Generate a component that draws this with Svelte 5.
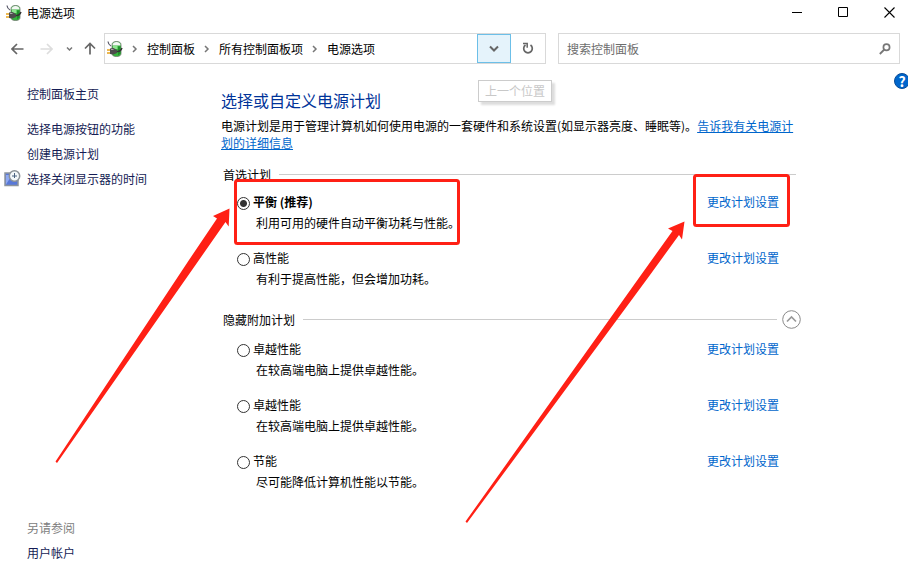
<script>
	const crumbs = ['控制面板', '所有控制面板项', '电源选项'];

	const groups = [
		{
			title: '首选计划',
			collapsible: false,
			plans: [
				{ id: 'balanced', name: '平衡 (推荐)', desc: '利用可用的硬件自动平衡功耗与性能。' },
				{ id: 'high', name: '高性能', desc: '有利于提高性能，但会增加功耗。' }
			]
		},
		{
			title: '隐藏附加计划',
			collapsible: true,
			plans: [
				{ id: 'ultimate-1', name: '卓越性能', desc: '在较高端电脑上提供卓越性能。' },
				{ id: 'ultimate-2', name: '卓越性能', desc: '在较高端电脑上提供卓越性能。' },
				{ id: 'saver', name: '节能', desc: '尽可能降低计算机性能以节能。' }
			]
		}
	];

	let active = $state('balanced');
	let search = $state('');
	let showExtra = $state(true);

	function toggleExtra() {
		showExtra = !showExtra;
	}
</script>

{#snippet powerIcon()}
	<svg class="power" width="16" height="16" viewBox="0 0 16 16" aria-hidden="true">
		<path d="M5 4q0-3.500 4.500-3.500T14 4v8.500q0 3-4.500 3T5 12.500z" fill="#35b53c" stroke="#6b756b" stroke-width="0.8" />
		<path d="M5.500 4.500Q5.500 1 9.500 1t4 3.500z" fill="#f4f7f4" />
		<path d="M6 5h4.500v3H6z" fill="#8be58d" />
		<path d="M11 5.500h2.500v7l-2.500 2z" fill="#1f8f2a" />
		<path d="M1 .5q.2 3 3 4.500" fill="none" stroke="#5b5b6b" stroke-width="1.200" />
		<path d="M0 9h3M0 12h3" stroke="#e8a21c" stroke-width="1.600" />
		<path d="M3 7.500l3.500-.5 3.500 2v3l-3.500 1.500L3 13z" fill="#4c4c4c" />
		<path d="M4 8.500h2.500" stroke="#aaa" />
		<path d="M10 10.500q3.500.3 5-3.500" fill="none" stroke="#333" stroke-width="1.500" />
	</svg>
{/snippet}

{#snippet chevron()}
	<svg class="sep" width="6" height="8" viewBox="0 0 6 8" aria-hidden="true">
		<path d="M1 1l3 3-3 3" fill="none" stroke="#777" stroke-width="1.500" />
	</svg>
{/snippet}

<div class="window">
	<header class="titlebar">
		{@render powerIcon()}
		<span class="title">电源选项</span>
		<div class="controls">
			<button type="button" aria-label="最小化">
				<svg width="11" height="11" viewBox="0 0 11 11"><path d="M0 5.500h10" stroke="#000" /></svg>
			</button>
			<button type="button" aria-label="最大化">
				<svg width="11" height="11" viewBox="0 0 11 11"><path d="M.5.500h9v9h-9z" fill="none" stroke="#000" /></svg>
			</button>
			<button type="button" aria-label="关闭">
				<svg width="11" height="11" viewBox="0 0 11 11"><path d="M.5.500l10 10M10.500.500l-10 10" stroke="#000" stroke-width="1.100" /></svg>
			</button>
		</div>
	</header>

	<nav class="toolbar">
		<div class="arrows">
			<button type="button" aria-label="后退">
				<svg width="13" height="12" viewBox="0 0 13 12"><path d="M12.500 6H1.500M6 1L1 6l5 5" fill="none" stroke="#666" stroke-width="1.700" /></svg>
			</button>
			<button type="button" aria-label="前进" disabled>
				<svg width="13" height="12" viewBox="0 0 13 12"><path d="M.5 6h11M7 1l5 5-5 5" fill="none" stroke="#ddd" stroke-width="1.700" /></svg>
			</button>
			<button type="button" class="recent" aria-label="最近的位置">
				<svg width="7" height="6" viewBox="0 0 7 6"><path d="M1 1.500l2.500 2.500L6 1.500" fill="none" stroke="#777" stroke-width="1.500" /></svg>
			</button>
			<button type="button" aria-label="上移">
				<svg width="12" height="13" viewBox="0 0 12 13"><path d="M6 12.500V1.500M1 6.500l5-5 5 5" fill="none" stroke="#666" stroke-width="1.700" /></svg>
			</button>
		</div>

		<div class="address">
			<div class="crumbs">
				{@render powerIcon()}
				{#each crumbs as crumb}
					{@render chevron()}
					<a href="#top">{crumb}</a>
				{/each}
			</div>
			<div class="dropdown">
				<button type="button" class="previous" aria-label="上一个位置">
					<svg width="10" height="7" viewBox="0 0 10 7"><path d="M1 1.500l4 4 4-4" fill="none" stroke="#666" stroke-width="2" /></svg>
				</button>
				<span class="tooltip" role="tooltip">上一个位置</span>
			</div>
			<button type="button" class="refresh" aria-label="刷新">
				<svg width="12" height="13" viewBox="0 0 12 13">
					<path d="M3.500 3A4.300 4.300 0 1 0 8.500 3" fill="none" stroke="#666" stroke-width="1.700" />
					<path d="M1 1.500h4.200v4.200" fill="none" stroke="#666" stroke-width="1.500" />
				</svg>
			</button>
		</div>

		<label class="search">
			<input type="text" placeholder="搜索控制面板" aria-label="搜索控制面板" bind:value={search} />
			<svg width="12" height="12" viewBox="0 0 12 12" aria-hidden="true">
				<circle cx="7.500" cy="4.300" r="3.100" fill="none" stroke="#777" stroke-width="1.700" />
				<path d="M5.300 6.500L.8 11" stroke="#777" stroke-width="1.800" />
			</svg>
		</label>
	</nav>

	<div class="body">
		<aside>
			<a class="home" href="#home">控制面板主页</a>
			<a href="#buttons">选择电源按钮的功能</a>
			<a href="#create">创建电源计划</a>
			<a class="with-icon" href="#display">
				<svg width="17" height="17" viewBox="0 0 17 17" aria-hidden="true">
					<rect x="1" y="3" width="13" height="12.500" fill="#5878d8" stroke="#8d949c" stroke-width="1.500" />
					<path d="M2 14.500L8 5H2z" fill="#8fa9f2" />
					<circle cx="10.500" cy="6" r="5.200" fill="#f3f8fb" stroke="#8b9298" stroke-width="1.500" />
					<path d="M10.500 3v5M8 6h5" stroke="#4b6380" stroke-width="1" />
				</svg>
				选择关闭显示器的时间
			</a>
			<div class="see-also">
				<span>另请参阅</span>
				<a href="#accounts">用户帐户</a>
			</div>
		</aside>

		<main>
			<h1>选择或自定义电源计划</h1>
			<p>
				电源计划是用于管理计算机如何使用电源的一套硬件和系统设置(如显示器亮度、睡眠等)。<a href="#more">告诉我有关电源计划的详细信息</a>
			</p>

			{#each groups as group}
				<section>
					<div class="group-head">
						<h2>{group.title}</h2>
						<hr />
						{#if group.collapsible}
							<button type="button" class="toggle" aria-label={group.title} onclick={toggleExtra}>
								<svg width="19" height="19" viewBox="0 0 19 19">
									<circle cx="9.500" cy="9.500" r="8.800" fill="none" stroke="#8a8a8a" />
									<path d="M5 11.500l4.500-4.500 4.500 4.500" fill="none" stroke="#999" stroke-width="1.700" />
								</svg>
							</button>
						{/if}
					</div>
					{#if !group.collapsible || showExtra}
						{#each group.plans as plan}
							<div class="plan">
								<input type="radio" name="plan" id={plan.id} value={plan.id} bind:group={active} />
								<div class="info">
									<label for={plan.id} class:active={plan.id === active}>{plan.name}</label>
									<span>{plan.desc}</span>
								</div>
								<a href="#settings">更改计划设置</a>
							</div>
						{/each}
					{/if}
				</section>
			{/each}
		</main>

		<button type="button" class="help" aria-label="帮助">?</button>
	</div>

	<!-- red callouts over the plan list -->
	<svg class="marks" width="908" height="580" viewBox="0 0 908 580" aria-hidden="true">
		<rect x="235.500" y="180.500" width="223" height="63" rx="2" />
		<rect x="694.500" y="175.500" width="94" height="50" rx="2" />
		<path d="M229.500 208.500L228.700 226.500L225.500 222L199 260L57 463L55.500 461.500L189 260L217 218.500L213 216z" />
		<path d="M684.500 221.500L682 239.500L679 235L650 275L467 523L465.500 521.500L641 275L672.500 231L668 228.500z" />
	</svg>
</div>

<style>
	:global(body) {
		margin: 0;
		background: #fff;
	}

	.window {
		position: relative;
		min-height: 100vh;
		box-sizing: border-box;
		display: flex;
		flex-direction: column;
		overflow: hidden;
		font-family: 'Noto Sans CJK SC', sans-serif;
		font-size: 12px;
		line-height: 17px;
		color: #000;
	}

	a {
		color: #0066cc;
		text-decoration: none;
	}

	button {
		display: flex;
		align-items: center;
		justify-content: center;
		padding: 0;
		border: none;
		background: none;
		font: inherit;
	}

	svg {
		flex: none;
	}

	.titlebar {
		display: flex;
		align-items: center;
		gap: 5px;
		height: 25px;
		padding-left: 6px;
	}

	.controls {
		display: flex;
		margin: 0 -4px 0 auto;
	}

	.controls button {
		width: 46px;
		height: 24px;
	}

	.toolbar {
		display: grid;
		grid-template-columns: 104px 454fr 342fr;
		height: 31px;
		margin: 8px 8px 0 0;
	}

	.arrows {
		display: flex;
		align-items: center;
		gap: 16px;
		padding-left: 11px;
	}

	.arrows .recent {
		margin: 0 -5px 0 -3px;
	}

	.address {
		display: flex;
		box-sizing: border-box;
		border: 1px solid #d9d9d9;
		margin-right: 12px;
	}

	.crumbs {
		display: flex;
		flex: 1;
		align-items: center;
		padding-left: 2px;
	}

	.crumbs a {
		color: #000;
	}

	.sep {
		margin: 0 9px;
	}

	.dropdown {
		position: relative;
		display: flex;
	}

	.previous {
		width: 34px;
		border: 1px solid #6cbfe8;
		background: #e5f3fb;
	}

	.tooltip {
		position: absolute;
		top: 46px;
		left: 1px;
		padding: 1px 6px;
		border: 1px solid #ccc;
		background: #fff;
		box-shadow: 3px 3px 2px #ddd;
		color: #c8c8c8;
		white-space: nowrap;
		line-height: 18px;
	}

	.refresh {
		width: 34px;
	}

	.search {
		display: flex;
		align-items: center;
		box-sizing: border-box;
		padding: 0 8px;
		border: 1px solid #d9d9d9;
	}

	.search input {
		flex: 1;
		min-width: 0;
		padding: 0;
		border: none;
		outline: none;
		background: none;
		font: inherit;
	}

	.search input::placeholder {
		color: #6d6d6d;
		opacity: 1;
	}

	.body {
		position: relative;
		display: flex;
		flex: 1;
	}

	aside {
		display: flex;
		flex-direction: column;
		gap: 8px;
		width: 194px;
		padding: 21px 0 19px 27px;
	}

	aside a {
		color: #151c55;
	}

	.home {
		margin-bottom: 10px;
	}

	.with-icon {
		display: flex;
		gap: 6px;
		margin-left: -23px;
	}

	.see-also {
		display: flex;
		flex-direction: column;
		gap: 8px;
		margin-top: auto;
		color: #808080;
	}

	main {
		flex: 1;
		max-width: 580px;
		padding-top: 24px;
	}

	h1 {
		margin: 0;
		font-size: 16px;
		font-weight: 400;
		line-height: 24px;
		color: #003399;
	}

	p {
		margin: 5px 0 14px;
	}

	p a {
		text-decoration: underline;
	}

	section {
		margin-left: 2px;
	}

	section + section {
		margin-top: 5px;
	}

	.group-head {
		display: flex;
		align-items: center;
		gap: 8px;
		height: 19px;
		margin-bottom: 9px;
	}

	section + section .group-head {
		margin-bottom: 11px;
	}

	h2 {
		margin: 0;
		font-size: 12px;
		font-weight: 400;
	}

	hr {
		flex: 1;
		margin: 0 5px 0 0;
		border: none;
		border-top: 1px solid #ccc;
	}

	.toggle {
		margin-left: -8px;
	}

	.plan {
		display: flex;
		align-items: flex-start;
		height: 56px;
		padding: 0 22px 0 14px;
	}

	.plan input {
		appearance: none;
		width: 13px;
		height: 13px;
		margin: 4px 3px 0 0;
		border: 1px solid #333;
		border-radius: 50%;
		box-sizing: border-box;
	}

	.plan input:checked {
		background: radial-gradient(#333 0 3px, #fff 4px);
	}

	.info {
		display: flex;
		flex: 1;
		flex-direction: column;
		gap: 4px;
	}

	.info span {
		padding-left: 3px;
	}

	.active {
		font-weight: 700;
	}

	.help {
		position: absolute;
		top: 9px;
		right: -2px;
		width: 16px;
		height: 16px;
		border: 1px solid #0a4c96;
		border-radius: 50%;
		background: #0066cc;
		color: #fff;
		font-size: 14px;
		font-weight: 700;
	}

	.marks {
		position: absolute;
		top: 0;
		left: 0;
		pointer-events: none;
	}

	.marks rect {
		fill: none;
		stroke: #ff2015;
		stroke-width: 3;
	}

	.marks path {
		fill: #ff2015;
	}
</style>
